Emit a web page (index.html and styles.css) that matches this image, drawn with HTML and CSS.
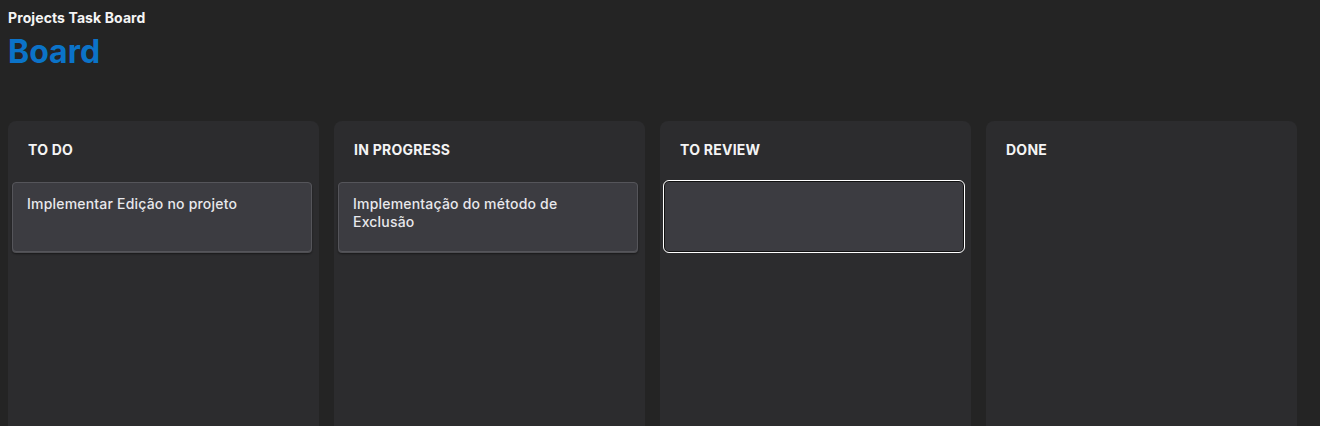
FILE: index.html
```html
<!DOCTYPE html>
<html lang="pt">
<head>
<meta charset="utf-8">
<title>Projects Task Board</title>
<link rel="stylesheet" href="styles.css">
</head>
<body>
<header class="page-head">
  <div class="app-name">Projects Task Board</div>
  <h1 class="page-title">Board</h1>
</header>
<main class="board">
  <section class="column">
    <h2 class="column-title">TO DO</h2>
    <div class="cards">
      <div class="card">Implementar Edição no projeto</div>
    </div>
  </section>
  <section class="column">
    <h2 class="column-title">IN PROGRESS</h2>
    <div class="cards">
      <div class="card">Implementação do método de Exclusão</div>
    </div>
  </section>
  <section class="column">
    <h2 class="column-title">TO REVIEW</h2>
    <div class="cards">
      <div class="card card-selected"></div>
    </div>
  </section>
  <section class="column">
    <h2 class="column-title">DONE</h2>
    <div class="cards"></div>
  </section>
</main>
</body>
</html>
```
FILE: styles.css
```css
html, body {
  background: #242424;
}
body {
  margin: 8px 8px 0;
  font-family: Inter, "Noto Sans", sans-serif;
  color: #f2f2f2;
  overflow: hidden;
}
.page-head {
  display: flex;
  flex-direction: column;
}
.app-name {
  font-size: 14px;
  font-weight: 700;
  line-height: 20px;
  letter-spacing: 0.1px;
  color: #f4f4f4;
}
.page-title {
  margin: 4px 0 0;
  font-size: 32px;
  line-height: 40px;
  font-weight: 700;
  color: #0b73c8;
}
.board {
  margin-top: 49px;
  display: grid;
  grid-template-columns: repeat(4, 311px);
  gap: 15px;
}
.column {
  box-sizing: border-box;
  background: #2c2c2e;
  border-radius: 8px 8px 0 0;
  height: 305px;
  padding: 20px 0 0;
}
.column-title {
  margin: 0 0 23px 20px;
  font-size: 14px;
  line-height: 18px;
  font-weight: 700;
  letter-spacing: 0.25px;
  color: #f4f4f4;
}
.cards {
  display: flex;
  flex-direction: column;
  gap: 10px;
  padding: 0 7px 0 4px;
}
.card {
  box-sizing: border-box;
  height: 70px;
  background: #3c3c41;
  border: 1px solid #55555a;
  border-radius: 4px;
  box-shadow: 0 1px 0 #4e4e52, 0 2px 2px rgba(0, 0, 0, 0.45);
  padding: 12px 30px 12px 14px;
  font-size: 14px;
  line-height: 18px;
  font-weight: 500;
  letter-spacing: 0.2px;
  color: #e8e8ec;
}
.card-selected {
  border: 1px solid #ffffff;
  border-radius: 6px;
  box-shadow: inset 0 0 0 1px #111;
  margin-left: -1px;
  margin-right: -1px;
  height: 73px;
  margin-top: -2px;
}
```
